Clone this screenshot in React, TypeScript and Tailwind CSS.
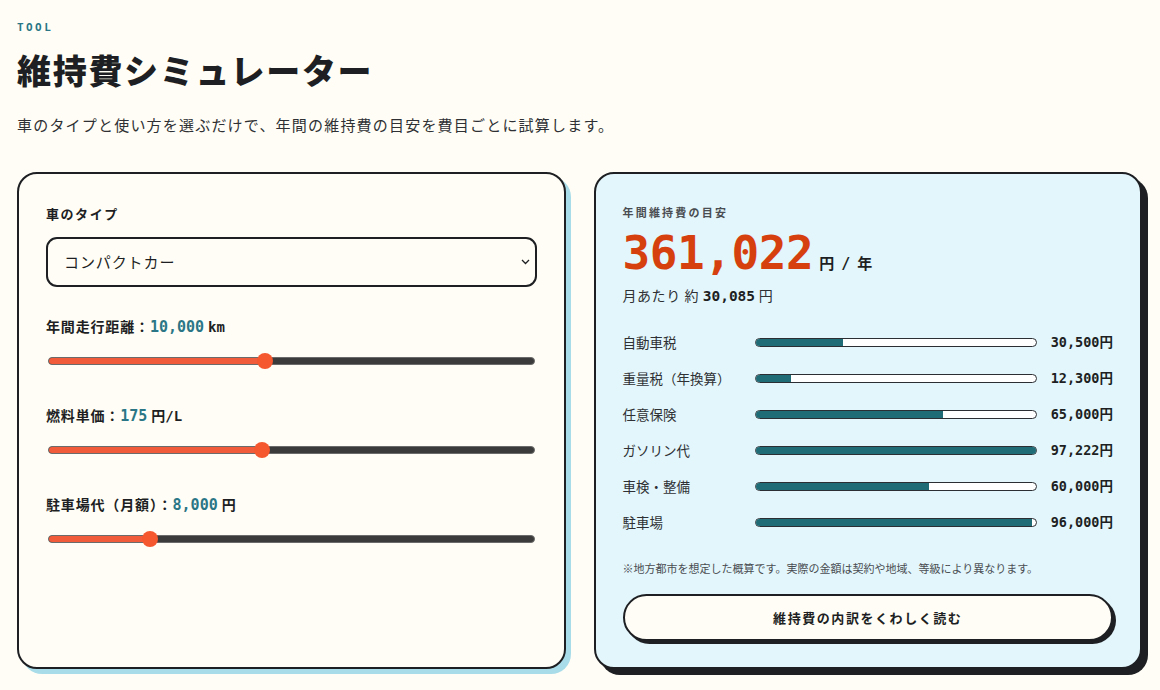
import React from "react";

const jp = "font-['Noto_Sans_CJK_JP','Noto_Sans',sans-serif]";
const mono = "font-['DejaVu_Sans_Mono','Noto_Sans_CJK_JP',monospace]";

function Slider({ pct }: { pct: number }) {
  return (
    <div className="relative mt-[16px] h-4 mx-[2px]">
      <div className="absolute left-0 right-0 top-[4px] h-[8px] rounded-full bg-[#3b3b3b] border border-[#6b6b6b] overflow-hidden">
        <div className="h-full bg-[#f15b3a]" style={{ width: `${pct}%` }} />
      </div>
      <div
        className="absolute top-0 h-4 w-4 -ml-2 rounded-full bg-[#f5572f]"
        style={{ left: `${pct}%` }}
      />
    </div>
  );
}

const rows = [
  { label: "自動車税", value: "30,500円", v: 30500 },
  { label: "重量税（年換算）", value: "12,300円", v: 12300 },
  { label: "任意保険", value: "65,000円", v: 65000 },
  { label: "ガソリン代", value: "97,222円", v: 97222 },
  { label: "車検・整備", value: "60,000円", v: 60000 },
  { label: "駐車場", value: "96,000円", v: 96000 },
];

export default function App() {
  return (
    <div className={`min-h-screen bg-[#fffdf5] text-[#1d1f23] ${jp} px-4 pt-[20px] pb-4`}>
      <div className={`${mono} text-[11px] leading-4 font-bold tracking-[0.22em] text-[#2a7686] pl-[1px]`}>
        TOOL
      </div>
      <h1 className="mt-[10px] text-[34px] leading-[48px] font-black tracking-[0.05em] pl-[1px]">
        維持費シミュレーター
      </h1>
      <p className="mt-[19px] text-[15px] leading-6 text-[#2e3033] tracking-[0.08em] pl-[1px]">
        車のタイプと使い方を選ぶだけで、年間の維持費の目安を費目ごとに試算します。
      </p>

      <div className="mt-[35px] grid grid-cols-2 gap-[28px] pl-[1px] pr-[2px]">
        {/* Left card */}
        <div className="rounded-[20px] border-2 border-[#1d1f23] bg-[#fffdf5] shadow-[5px_5px_0_#a9dce9] px-[27px] pt-[30px]">
          <div className="text-[13px] leading-5 font-bold tracking-[0.12em]">車のタイプ</div>
          <div className="relative mt-[13px]">
            <select
              defaultValue="compact"
              className={`${jp} w-full h-[50px] appearance-none rounded-[11px] border-2 border-[#1d1f23] bg-[#fffdf5] pl-[16px] text-[15px] tracking-[0.06em] text-[#1d1f23] outline-none`}
            >
              <option value="compact">コンパクトカー</option>
            </select>
            <svg
              className="pointer-events-none absolute right-[7px] top-[22px]"
              width="9"
              height="6"
              viewBox="0 0 9 6"
              fill="none"
              stroke="#1d1f23"
              strokeWidth="1.3"
            >
              <path d="M1 1l3.5 3.5L8 1" />
            </svg>
          </div>

          <div className="mt-[29px] text-[14px] leading-5 font-bold tracking-[0.06em]">
            年間走行距離：<span className={`${mono} text-[#2a7686] text-[15px] tracking-normal`}>10,000</span>{" "}
            <span className={`${mono} text-[14px] tracking-normal`}>km</span>
          </div>
          <Slider pct={44.6} />

          <div className="mt-[36px] text-[14px] leading-5 font-bold tracking-[0.06em]">
            燃料単価：<span className={`${mono} text-[#2a7686] text-[15px] tracking-normal`}>175</span>{" "}
            <span className={`${mono} text-[14px] tracking-normal`}>円/L</span>
          </div>
          <Slider pct={44} />

          <div className="mt-[36px] text-[14px] leading-5 font-bold tracking-[0.06em]">
            駐車場代（月額）：<span className={`${mono} text-[#2a7686] text-[15px] tracking-normal`}>8,000</span>{" "}
            <span className="text-[14px]">円</span>
          </div>
          <Slider pct={20.9} />
        </div>

        {/* Right card */}
        <div className="rounded-[20px] border-2 border-[#1d1f23] bg-[#e2f6fb] shadow-[6px_6px_0_#1d1f23] px-[27px] pt-[30px] pb-[26px]">
          <div className="text-[11px] leading-4 font-bold tracking-[0.2em] text-[#4a4d52]">年間維持費の目安</div>
          <div className="mt-[10px] flex items-baseline">
            <span className={`${mono} text-[46px] leading-[46px] font-bold text-[#d6400f] tracking-[-0.01em]`}>361,022</span>
            <span className="ml-[6px] text-[15px] font-bold tracking-[0.12em]">
              円 <span className={mono}>/</span> 年
            </span>
          </div>
          <div className="mt-[9px] text-[14px] leading-5 text-[#2e3033] tracking-[0.04em]">
            月あたり 約 <span className={`${mono} text-[14.5px] font-bold text-[#1d1f23] tracking-normal`}>30,085</span> 円
          </div>

          <div className="mt-[18px] flex flex-col">
            {rows.map((r) => (
              <div key={r.label} className="h-9 flex items-center">
                <div className="w-[132px] text-[13.5px] text-[#2e3033]">{r.label}</div>
                <div className="flex-1 h-[9px] rounded-full border-[1.5px] border-[#2b2e33] bg-white overflow-hidden">
                  <div className="h-full bg-[#1f6c76]" style={{ width: `${(r.v / 97222) * 100}%` }} />
                </div>
                <div className={`${mono} ml-[10px] w-[66px] text-right text-[13.5px] font-bold text-[#1d1f23]`}>{r.value}</div>
              </div>
            ))}
          </div>

          <div className="mt-[20px] text-[11px] leading-4 text-[#4a4d52]">
            ※地方都市を想定した概算です。実際の金額は契約や地域、等級により異なります。
          </div>

          <button
            className={`${jp} mt-[18px] w-full h-[47px] rounded-full border-2 border-[#1d1f23] bg-[#fffdf5] shadow-[3px_3px_0_#1d1f23] text-[13px] font-bold tracking-[0.12em] text-[#1d1f23]`}
          >
            維持費の内訳をくわしく読む
          </button>
        </div>
      </div>
    </div>
  );
}
